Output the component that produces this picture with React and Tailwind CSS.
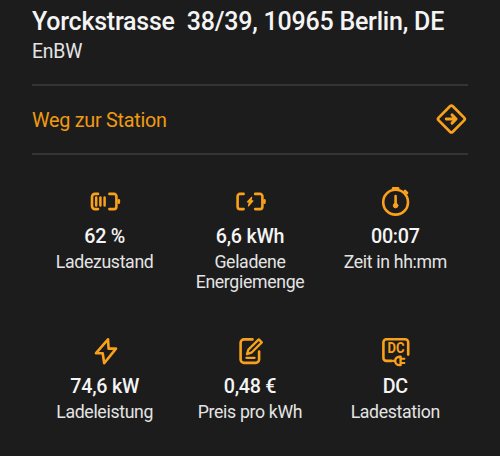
function Icon({ children }) {
  return (
    <svg
      viewBox="0 0 40 36"
      className="block h-9 w-10"
      fill="none"
      stroke="currentColor"
      strokeWidth="2.6"
      strokeLinecap="round"
      strokeLinejoin="round"
    >
      {children}
    </svg>
  );
}

const BatteryLevel = () => (
  <Icon>
    <path d="M13 10.9H10a3 3 0 0 0-3 3v9.2a3 3 0 0 0 3 3H13" />
    <path d="M11.2 14.6v7.8M15.4 14.6v7.8M19.6 14.6v7.8" strokeWidth="2.5" />
    <path d="M24.4 10.9H29a2.4 2.4 0 0 1 2.4 2.4v10.4a2.4 2.4 0 0 1-2.4 2.4h-4.6" />
    <path d="M33.8 17.3v2.4" />
  </Icon>
);

const BatteryCharge = () => (
  <Icon>
    <path d="M13.6 10.9H10a2.4 2.4 0 0 0-2.4 2.4v10.4a2.4 2.4 0 0 0 2.4 2.4h3.6" />
    <path d="M25.2 10.9H30a2.4 2.4 0 0 1 2.4 2.4v10.4a2.4 2.4 0 0 1-2.4 2.4h-4.8" />
    <path d="M34.4 17.3v2.4" />
    <path d="M21.6 14.4l-4.1 4.5h2l-1 4 4.4-5h-2z" fill="currentColor" strokeWidth="1.3" />
  </Icon>
);

const Stopwatch = () => (
  <Icon>
    <circle cx="20.6" cy="19.2" r="12.4" />
    <path d="M18 5.4h5.2M30 8l2 2" />
    <path d="M20.6 13v8" />
    <circle cx="20.6" cy="22.6" r="2.3" fill="currentColor" strokeWidth="1" />
  </Icon>
);

const Bolt = () => (
  <Icon>
    <path d="M23 6.4L11 20.2h6.7l1.5 10L31 15.6h-7.4z" />
  </Icon>
);

const EditNote = () => (
  <Icon>
    <path d="M22.5 6.4H14a3.4 3.4 0 0 0-3.4 3.4v16.7a3.4 3.4 0 0 0 3.4 3.4h11.7a3.4 3.4 0 0 0 3.4-3.4V18.6" />
    <path d="M17 21.2l1.4-4.6L28.8 6.4l3 3-10.4 10.3z" strokeWidth="2.3" />
    <path d="M16.4 24.8h8.2" strokeWidth="2.3" />
  </Icon>
);

const DcStation = () => (
  <Icon>
    <path d="M16.6 27.9h-5.2a3 3 0 0 1-3-3V9.2a3 3 0 0 1 3-3h18.8a3 3 0 0 1 3 3v12.4" />
    <text
      x="12.6"
      y="20.2"
      textLength="17"
      lengthAdjust="spacingAndGlyphs"
      fill="currentColor"
      stroke="none"
      className="font-['Roboto','Liberation_Sans',sans-serif] text-[14.4px] font-bold"
    >
      DC
    </text>
    <path d="M18.2 27.9h2M25.6 23.7h-1.2a4.2 4.2 0 0 0 0 8.4h1.2z" strokeWidth="2.4" />
    <path d="M26.4 25.7h3M26.4 30.1h3" strokeWidth="2" />
  </Icon>
);

const metrics = [
  { icon: BatteryLevel, value: "62 %", label: "Ladezustand" },
  { icon: BatteryCharge, value: "6,6 kWh", label: "Geladene Energiemenge" },
  { icon: Stopwatch, value: "00:07", label: "Zeit in hh:mm" },
  { icon: Bolt, value: "74,6 kW", label: "Ladeleistung" },
  { icon: EditNote, value: "0,48 €", label: "Preis pro kWh" },
  { icon: DcStation, value: "DC", label: "Ladestation" },
];

export default function App() {
  return (
    <main className="h-[456px] w-[500px] overflow-hidden bg-[#1c1c1c] px-8 pt-2 font-['Roboto','Liberation_Sans',sans-serif] text-[#e4e4e4]">
      <header className="h-[76px]">
        <h1 className="whitespace-pre text-[25px] font-medium leading-[28px] tracking-[-0.23px] text-[#f4f4f4]">
          Yorckstrasse  38/39, 10965 Berlin, DE
        </h1>
        <p className="mt-1 text-[19.4px] leading-6 tracking-[-0.2px]">EnBW</p>
      </header>
      <a className="flex h-[71px] items-center justify-between border-y-2 border-[#343434] text-[#f9a11b]">
        <span className="pt-[3px] text-[19.8px] leading-6 tracking-[-0.25px] text-[#f09a14]">Weg zur Station</span>
        <svg
          viewBox="0 0 34 34"
          className="mb-0.5 h-[34px] w-[34px]"
          fill="none"
          stroke="currentColor"
          strokeWidth="2.7"
          strokeLinecap="round"
          strokeLinejoin="round"
        >
          <rect x="7.4" y="7" width="20" height="20" rx="2" transform="rotate(45 17.4 17)" />
          <path d="M12.2 17h9.6M18 12.9l4.1 4.1-4.1 4.1" strokeWidth="2.9" />
        </svg>
      </a>
      <section className="grid grid-cols-3 grid-rows-[150px_120px] pt-7">
        {metrics.map(({ icon: MetricIcon, value, label }) => (
          <div key={value} className="flex flex-col items-center text-center">
            <span className="text-[#f9a11b]">
              <MetricIcon />
            </span>
            <strong className="mt-1.5 text-[19.7px] font-medium leading-6 tracking-[-0.25px] text-[#f4f4f4]">{value}</strong>
            <span className="mt-[3px] w-[125px] text-[17.7px] leading-5 tracking-[-0.33px]">{label}</span>
          </div>
        ))}
      </section>
    </main>
  );
}
